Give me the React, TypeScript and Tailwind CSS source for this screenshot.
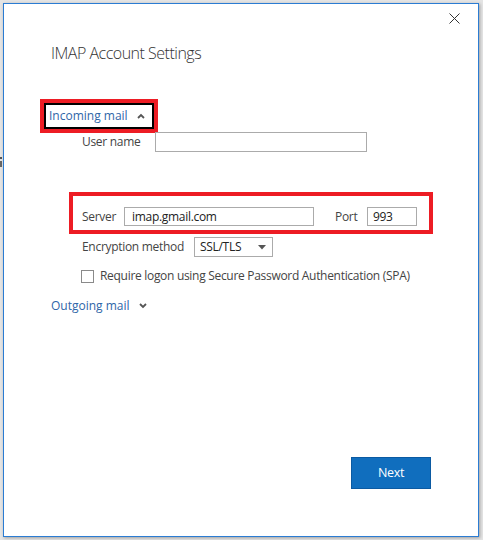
import React from 'react';

const font = { fontFamily: '"Segoe UI", "Open Sans", "Noto Sans", sans-serif' };

const ChevronUp = () => (
    <svg width="8" height="6" viewBox="0 0 8 6" className="ml-[9px]">
        <polyline points="1,5 4,2 7,5" fill="none" stroke="#555" strokeWidth="1.8" />
    </svg>
);

const ChevronDown = () => (
    <svg width="8" height="6" viewBox="0 0 8 6" className="ml-[9px]">
        <polyline points="1,1 4,4 7,1" fill="none" stroke="#555" strokeWidth="1.8" />
    </svg>
);

const App: React.FC = () => {
    return (
        <div className="flex w-[483px] h-[540px] bg-[#e4e4e4] overflow-hidden tracking-[-0.3px]" style={font}>
            {/* sliver of the window behind */}
            <div className="w-[3px] shrink-0 flex flex-col">
                <div className="mt-[157px] w-[2px] h-[2px] bg-[#555]" />
                <div className="mt-[2px] w-[2px] h-[6px] bg-[#666]" />
            </div>

            <div className="mt-[3px] w-[476px] h-[534px] shrink-0 border border-[#2b7cd3] bg-white flex flex-col shadow-[1px_1px_3px_rgba(0,0,0,0.3)]">
                {/* Close */}
                <div className="h-[37px] flex justify-end items-start pt-[9px] pr-[18px]">
                    <svg width="11" height="11" viewBox="0 0 11 11">
                        <path d="M0.5 0.5 L10.5 10.5 M10.5 0.5 L0.5 10.5" stroke="#333" strokeWidth="1" />
                    </svg>
                </div>

                <h1 className="pl-[47px] text-[16px] leading-[24px] font-light tracking-[-0.5px] text-[#333]">IMAP Account Settings</h1>

                {/* Incoming mail */}
                <div className="mt-[34px] ml-[36px] w-[118px] h-[34px] border-[4px] border-[#ed1c24]">
                    <div className="h-full border-2 border-black flex items-center pl-[3px] text-[12px] tracking-normal text-[#2f66a8]">
                        Incoming mail
                        <ChevronUp />
                    </div>
                </div>

                <div className="-mt-px ml-[78px] flex items-center text-[12px] text-[#444]">
                    <span className="w-[73px]">User name</span>
                    <div className="w-[212px] h-[20px] border border-[#ababab]" />
                </div>

                {/* Server / Port */}
                <div className="mt-[40px] ml-[65px] w-[364px] h-[42px] border-[4px] border-[#ed1c24] pt-[11px] pl-[9px]">
                    <div className="flex items-center text-[12px] text-[#444]">
                        <span className="w-[42px]">Server</span>
                        <div className="w-[190px] h-[19px] border border-[#ababab] flex items-center pl-[7px] text-[#222]">
                            imap.gmail.com
                        </div>
                        <span className="ml-[21px] w-[32px]">Port</span>
                        <div className="w-[50px] h-[19px] border border-[#ababab] flex items-center pl-[5px] text-[#222]">
                            993
                        </div>
                    </div>
                </div>

                <div className="mt-[3px] ml-[78px] flex items-center text-[12px] text-[#444]">
                    <span className="w-[112px]">Encryption method</span>
                    <div className="w-[79px] h-[20px] border border-[#ababab] flex items-center justify-between pl-[5px] pr-[6px] text-[#222]">
                        SSL/TLS
                        <svg width="8" height="5" viewBox="0 0 8 5">
                            <polygon points="0,0 8,0 4,4.5" fill="#555" />
                        </svg>
                    </div>
                </div>

                <div className="mt-[10px] ml-[77px] flex items-center text-[12px] text-[#444]">
                    <div className="w-[13px] h-[13px] border border-[#8a8a8a]" />
                    <span className="ml-[6px]">Require logon using Secure Password Authentication (SPA)</span>
                </div>

                <div className="mt-[11px] ml-[47px] h-[20px] flex items-center text-[12px] tracking-normal text-[#2f66a8]">
                    Outgoing mail
                    <ChevronDown />
                </div>

                <div className="mt-auto pb-[47px] pr-[47px] flex justify-end">
                    <button className="w-[80px] h-[32px] bg-[#106ebe] border border-[#0b5aa2] text-white text-[12.5px]">
                        Next
                    </button>
                </div>
            </div>
        </div>
    );
};

export default App;
